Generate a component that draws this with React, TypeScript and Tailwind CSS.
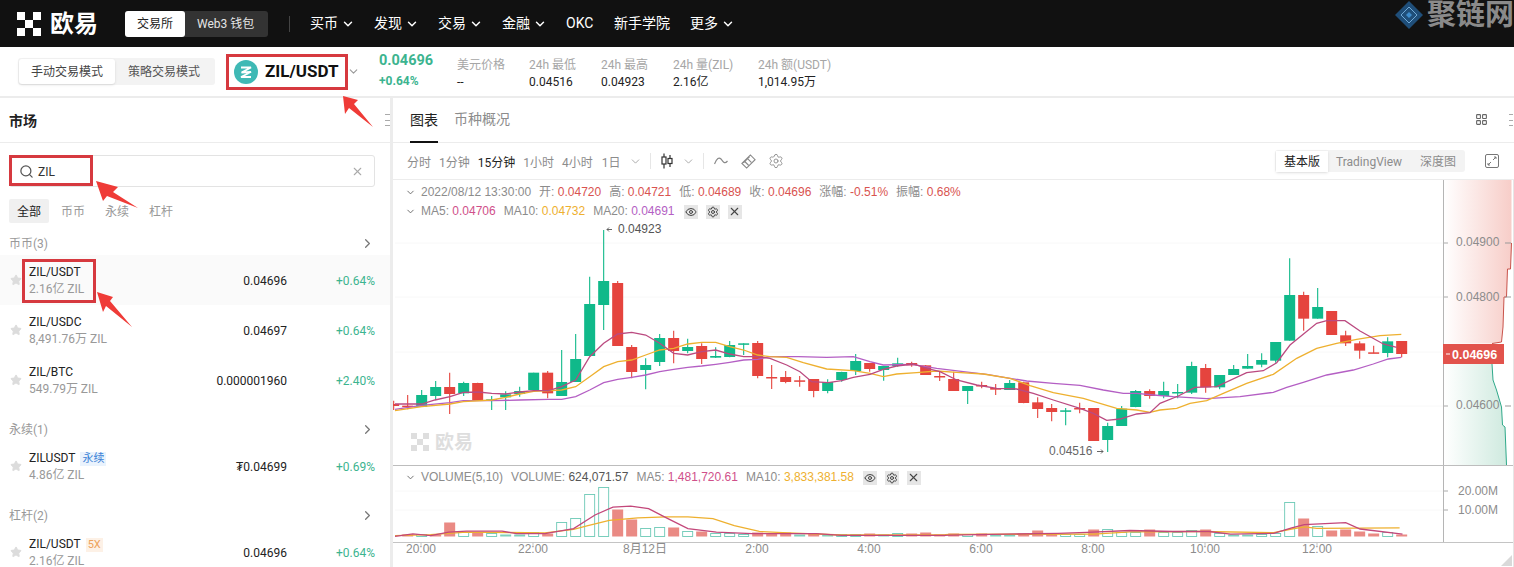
import React from 'react';
import { ChevronDown, ChevronRight, Eye, LayoutGrid, Search, Settings, Star, X } from 'lucide-react';

const UP = '#10b98a';
const DOWN = '#e5443e';

type Candle = [number, number, number, number, string];

// y values read at 3x, base is the y where each block starts
const candlesA: Candle[] = [
  [662, 690, 672, 678, 'r'], [645, 688, 677, 680, 'r'], [630, 680, 645, 680, 'g'], [603, 660, 621, 648, 'g'],
  [578, 702, 621, 642, 'r'], [605, 648, 609, 640, 'g'], [608, 660, 609, 660, 'r'], [648, 690, 658, 663, 'g'],
  [634, 690, 643, 652, 'g'], [620, 650, 633, 642, 'g'], [578, 630, 578, 630, 'g'], [573, 655, 578, 640, 'r'],
  [510, 648, 606, 648, 'g'], [462, 606, 537, 606, 'g'], [290, 528, 372, 528, 'g'], [150, 450, 303, 375, 'g'],
  [303, 498, 309, 498, 'r'], [495, 595, 501, 576, 'r'], [535, 628, 555, 570, 'g'], [462, 558, 474, 546, 'g'],
  [452, 550, 474, 513, 'r'], [476, 520, 501, 513, 'g'], [490, 552, 498, 537, 'r'], [502, 534, 528, 533, 'g'],
  [483, 532, 495, 531, 'g'], [490, 525, 490, 494, 'g'], [483, 595, 489, 588, 'r'],
];
const candlesB: Candle[] = [
  [375, 447, 411, 414, 'r'], [393, 430, 411, 426, 'r'], [408, 440, 421, 424, 'r'], [417, 472, 417, 453, 'r'],
  [418, 460, 426, 453, 'g'], [395, 425, 396, 420, 'g'], [342, 405, 363, 393, 'g'], [369, 395, 369, 387, 'r'],
  [378, 422, 378, 390, 'g'], [353, 380, 370, 378, 'g'], [365, 380, 369, 376, 'r'], [375, 405, 376, 405, 'r'],
  [393, 423, 408, 412, 'r'], [395, 453, 417, 453, 'r'], [438, 492, 438, 453, 'g'], [425, 445, 435, 439, 'r'],
  [432, 465, 444, 449, 'r'], [420, 450, 429, 450, 'g'], [425, 490, 427, 489, 'r'], [472, 534, 487, 507, 'r'],
  [492, 544, 504, 516, 'r'], [504, 556, 511, 515, 'g'], [488, 520, 504, 507, 'r'], [504, 603, 504, 603, 'r'],
  [548, 636, 558, 600, 'g'], [498, 558, 506, 558, 'g'], [450, 502, 453, 501, 'g'],
];
const candlesC: Candle[] = [
  [628, 656, 633, 648, 'r'], [605, 655, 633, 648, 'g'], [612, 655, 636, 640, 'g'], [545, 642, 558, 638, 'g'],
  [552, 638, 564, 622, 'r'], [585, 628, 585, 622, 'g'], [555, 585, 567, 585, 'g'], [522, 566, 558, 566, 'g'],
  [520, 562, 540, 554, 'g'], [486, 548, 486, 542, 'g'], [235, 482, 345, 482, 'g'], [335, 452, 345, 416, 'r'],
  [324, 416, 381, 416, 'g'], [393, 465, 393, 465, 'r'], [452, 498, 466, 490, 'r'], [484, 536, 490, 512, 'r'],
  [497, 520, 517, 520, 'r'], [472, 532, 484, 519, 'g'], [483, 532, 483, 522, 'r'],
];

const candles = [
  ...candlesA.map(c => ({ c, base: 180 })),
  ...candlesB.map(c => ({ c, base: 240 })),
  ...candlesC.map(c => ({ c, base: 180 })),
];

// one value per candle, r = solid red, g = solid green, h = hollow
const volumes: [number, string][] = [
  [2, 'r'], [2, 'h'], [2, 'r'], [14, 'r'], [4, 'h'], [4, 'r'], [3, 'h'], [2, 'g'], [2, 'g'], [4, 'h'], [3, 'r'],
  [14, 'h'], [18, 'h'], [42, 'h'], [49, 'h'], [27, 'r'], [17, 'r'], [8, 'h'], [9, 'h'], [9, 'r'], [5, 'h'], [5, 'r'],
  [3, 'h'], [3, 'h'], [2, 'h'], [4, 'r'], [3, 'r'], [4, 'r'], [2, 'g'], [3, 'r'], [2, 'g'], [2, 'h'], [2, 'h'],
  [3, 'r'], [2, 'g'], [3, 'h'], [3, 'r'], [4, 'r'], [2, 'r'], [3, 'r'], [2, 'h'], [3, 'r'], [2, 'g'], [2, 'g'],
  [3, 'r'], [6, 'r'], [3, 'r'], [2, 'h'], [2, 'h'], [7, 'r'], [7, 'h'], [4, 'h'], [4, 'h'], [7, 'r'], [4, 'h'],
  [4, 'h'], [6, 'h'], [7, 'r'], [3, 'h'], [2, 'g'], [2, 'g'], [2, 'h'], [3, 'h'], [34, 'h'], [18, 'r'], [10, 'h'],
  [6, 'r'], [7, 'r'], [5, 'r'], [3, 'r'], [4, 'h'], [2, 'r'],
];

const toPts = (pts: number[][], ox: number, oy: number, k = 3) =>
  pts.map(([x, y]) => `${(ox + x / k).toFixed(1)},${(oy + y / k).toFixed(1)}`).join(' ');

const ma5 =
  toPts([[0, 672], [80, 672], [120, 660], [165, 650], [205, 637], [250, 636], [290, 640], [332, 642], [374, 636], [416, 632], [460, 632], [500, 620], [542, 600], [584, 530], [626, 490], [668, 462], [710, 457], [752, 465], [794, 490], [836, 520], [878, 525], [920, 515], [962, 510], [1004, 522], [1046, 530], [1088, 530]], 395, 180) + ' ' +
  toPts([[0, 355], [50, 375], [90, 395], [125, 425], [175, 428], [215, 422], [250, 412], [300, 403], [340, 388], [380, 378], [430, 372], [470, 385], [510, 395], [560, 420], [620, 435], [680, 445], [740, 447], [790, 460], [850, 480], [930, 505], [970, 520], [1010, 541], [1050, 537], [1100, 522]], 770, 240) + ' ' +
  toPts([[30, 698], [60, 670], [115, 648], [165, 622], [230, 620], [320, 578], [370, 572], [410, 548], [450, 495], [530, 430], [560, 422], [615, 422], [660, 453], [730, 492], [770, 502]], 1140, 180);

const ma10 =
  toPts([[0, 692], [80, 680], [165, 672], [205, 665], [290, 660], [332, 652], [374, 642], [416, 634], [500, 630], [542, 620], [584, 590], [626, 560], [668, 545], [710, 540], [752, 525], [794, 510], [836, 505], [878, 492], [920, 487], [962, 487], [1004, 500], [1046, 510], [1088, 525]], 395, 180) + ' ' +
  toPts([[0, 350], [50, 352], [100, 368], [170, 387], [250, 392], [300, 400], [340, 410], [380, 402], [440, 398], [500, 393], [560, 397], [640, 402], [720, 415], [780, 437], [850, 458], [940, 475], [1040, 505], [1100, 510]], 770, 240) + ' ' +
  toPts([[30, 697], [60, 690], [110, 685], [150, 670], [200, 662], [250, 640], [320, 610], [400, 583], [470, 535], [530, 505], [590, 490], [650, 478], [720, 467], [784, 463]], 1140, 180);

const ma20 =
  toPts([[0, 688], [80, 676], [165, 668], [205, 662], [290, 662], [374, 660], [460, 658], [500, 658], [542, 650], [584, 630], [626, 608], [668, 598], [710, 592], [752, 585], [794, 575], [836, 568], [878, 562], [920, 558], [962, 553], [1004, 547], [1046, 540], [1088, 538]], 395, 180) + ' ' +
  toPts([[0, 350], [85, 350], [170, 352], [250, 350], [300, 365], [340, 375], [425, 373], [500, 385], [580, 395], [650, 403], [720, 415], [770, 423], [850, 430], [930, 436], [1000, 450], [1060, 460], [1100, 460]], 770, 240) + ' ' +
  toPts([[40, 645], [100, 650], [200, 656], [300, 650], [400, 637], [440, 622], [490, 607], [560, 585], [640, 570], [700, 552], [745, 537], [784, 532]], 1140, 180);

const volMa5 =
  toPts([[0, 200], [50, 193], [100, 198], [150, 188], [200, 185], [300, 185], [340, 192], [420, 192], [500, 178], [560, 140], [610, 118], [660, 115], [710, 122], [760, 148], [820, 178], [900, 188], [1000, 192], [1180, 192], [1250, 197], [1540, 197]], 395, 465, 2.8) + ' ' +
  toPts([[0, 195], [300, 190], [380, 187], [500, 182], [620, 185], [720, 185], [780, 192], [900, 190], [950, 175], [985, 166], [1100, 160], [1140, 178], [1258, 192]], 950, 465, 2.78);

const volMa10 =
  toPts([[0, 198], [100, 195], [200, 188], [420, 190], [500, 180], [540, 170], [600, 155], [680, 148], [760, 145], [820, 145], [890, 150], [950, 170], [1020, 186], [1100, 190], [1250, 196], [1540, 195]], 395, 465, 2.8) + ' ' +
  toPts([[0, 193], [400, 192], [500, 186], [700, 185], [900, 188], [950, 178], [985, 172], [1020, 176], [1250, 175]], 950, 465, 2.78);

const timeLabels: [number, string][] = [
  [421, '20:00'], [533, '22:00'], [645, '8月12日'], [757, '2:00'], [869, '4:00'], [981, '6:00'], [1093, '8:00'], [1205, '10:00'], [1317, '12:00'],
];

function Logo({ className, fill }: { className: string; fill: string }) {
  return (
    <svg viewBox="0 0 24 24" className={className} fill={fill}>
      <rect x="0" y="0" width="8" height="8" />
      <rect x="16" y="0" width="8" height="8" />
      <rect x="8" y="8" width="8" height="8" />
      <rect x="0" y="16" width="8" height="8" />
      <rect x="16" y="16" width="8" height="8" />
    </svg>
  );
}

function ChartSvg() {
  return (
    <svg viewBox="393 180 1121 387" className="absolute inset-0 w-full h-full [font-family:'Liberation_Sans','Noto_Sans_CJK_SC',sans-serif]">
      <defs>
        <linearGradient id="askFill" x1="0" x2="1" y1="0" y2="0">
          <stop offset="0" stopColor="#ffffff" />
          <stop offset="1" stopColor="#f7cdc8" />
        </linearGradient>
        <linearGradient id="bidFill" x1="0" x2="1" y1="0" y2="0">
          <stop offset="0" stopColor="#ffffff" />
          <stop offset="1" stopColor="#cfeadf" />
        </linearGradient>
      </defs>

      {[243, 297, 352, 406, 491, 510].map(y => (
        <line key={y} x1="395" x2="1443" y1={y} y2={y} stroke="#f8f8f8" />
      ))}

      {/* depth */}
      <polygon
        points="1444,180 1511.5,180 1511.5,243 1510.5,269 1507.5,269 1506.5,297 1504,297 1503,327 1501.5,342 1492,343.5 1444,343.5"
        fill="url(#askFill)"
      />
      <polyline points="1511.5,243 1510.5,269 1507.5,269 1506.5,297 1504,297 1503,327 1501.5,342 1492,343.5" fill="none" stroke="#c9534b" />
      <polygon
        points="1444,364 1492,364 1493,380 1496.5,390 1501.5,407 1502.5,425 1505,427 1506.5,465 1444,465"
        fill="url(#bidFill)"
      />
      <polyline points="1492,364 1493,380 1496.5,390 1501.5,407 1502.5,425 1505,427 1506.5,465" fill="none" stroke="#2fa98a" />

      {/* candles */}
      {candles.map(({ c, base }, i) => {
        const x = 393.67 + 14 * i;
        const col = c[4] === 'g' ? UP : DOWN;
        const top = base + c[2] / 3;
        const h = Math.max(1.5, (c[3] - c[2]) / 3);
        return (
          <g key={i}>
            <line x1={x} x2={x} y1={base + c[0] / 3} y2={base + c[1] / 3} stroke={col} strokeWidth="1.1" />
            <rect x={x - 5.5} y={top} width="11" height={h} fill={col} />
          </g>
        );
      })}

      <polyline points={ma20} fill="none" stroke="#b45fc4" strokeWidth="1.3" />
      <polyline points={ma10} fill="none" stroke="#eeb02f" strokeWidth="1.3" />
      <polyline points={ma5} fill="none" stroke="#bb4a80" strokeWidth="1.3" />

      <path d="M607 229.5h5M607 229.5l2-2M607 229.5l2 2" fill="none" stroke="#555" strokeWidth="0.9" />
      <text x="618" y="233" fontSize="12" fill="#555">0.04923</text>
      <text x="1049" y="455" fontSize="12" fill="#666">0.04516</text>
      <path d="M1097 451.5h6M1103 451.5l-2-2M1103 451.5l-2 2" fill="none" stroke="#555" strokeWidth="0.9" />

      {/* volume */}
      {volumes.map(([h, t], i) => {
        const x = 407.67 + 14 * i;
        if (t === 'h') {
          return <rect key={i} x={x - 5} y={536.5 - h} width="10" height={h} fill="#fff" stroke="#6cc9b6" strokeWidth="0.9" />;
        }
        return <rect key={i} x={x - 5.5} y={536.5 - h} width="11" height={h} fill={t === 'r' ? '#ea8a84' : '#7fd0bb'} />;
      })}
      <polyline points={volMa10} fill="none" stroke="#eeb02f" strokeWidth="1.3" />
      <polyline points={volMa5} fill="none" stroke="#c3477a" strokeWidth="1.3" />

      {/* axes */}
      <line x1="1443.5" x2="1443.5" y1="180" y2="542" stroke="#b5b5b5" />
      <line x1="393" x2="1513" y1="465.5" y2="465.5" stroke="#bdbdbd" />
      <line x1="393" x2="1513" y1="542.5" y2="542.5" stroke="#c4c4c4" />
      <line x1="1513.5" x2="1513.5" y1="0" y2="567" stroke="#e6e6e6" />
      {[243, 297, 352, 406, 491, 510].map(y => (
        <line key={y} x1="1444" x2="1448" y1={y} y2={y} stroke="#aaa" />
      ))}
      {[243, 297, 406].map(y => (
        <line key={y} x1="1505" x2="1511" y1={y} y2={y} stroke="#999" />
      ))}
      {[
        [246, '0.04900'], [301, '0.04800'], [409, '0.04600'],
      ].map(([y, t]) => (
        <text key={t} x="1456" y={y} fontSize="12" fill="#8c8c8c">{t}</text>
      ))}
      <text x="1458" y="495" fontSize="12" fill="#8c8c8c">20.00M</text>
      <text x="1458" y="514" fontSize="12" fill="#8c8c8c">10.00M</text>

      <rect x="1443" y="344" width="61" height="20" fill="#e2534c" />
      <line x1="1446" x2="1450" y1="354" y2="354" stroke="#fff" />
      <text x="1452" y="358.5" fontSize="12.5" fontWeight="700" fill="#fff">0.04696</text>

      {timeLabels.map(([x, t]) => (
        <g key={t}>
          <line x1={x} x2={x} y1="542" y2="546" stroke="#c4c4c4" />
          <text x={x} y="553" fontSize="12" textAnchor="middle" fill="#8c8c8c">{t}</text>
        </g>
      ))}
      <polygon points="1512,555 1512,566 1501,566" fill="#d9d9d9" />

      <g fill="#dedede">
        <rect x="411" y="433" width="6" height="6" />
        <rect x="423" y="433" width="6" height="6" />
        <rect x="417" y="439" width="6" height="6" />
        <rect x="411" y="445" width="6" height="6" />
        <rect x="423" y="445" width="6" height="6" />
        <text x="435" y="449" fontSize="19" fontWeight="700">欧易</text>
      </g>
    </svg>
  );
}

function LegendButtons() {
  return (
    <span className="flex items-center gap-[8px] ml-[9px]">
      <span className="w-[14px] h-[14px] bg-[#e6e6e6] flex items-center justify-center"><Eye size={12} color="#444" /></span>
      <span className="w-[14px] h-[14px] bg-[#e6e6e6] flex items-center justify-center"><Settings size={12} color="#444" /></span>
      <span className="w-[14px] h-[14px] bg-[#e6e6e6] flex items-center justify-center"><X size={13} color="#444" /></span>
    </span>
  );
}

function Chart() {
  const g = 'text-[#8c8c8c]';
  const r = 'text-[#d9534f] mr-[8px]';
  return (
    <div className="relative flex-1 min-h-0">
      <ChartSvg />
      <div className="absolute left-[12px] top-[3px] text-[12px] leading-[19px] [font-family:'Liberation_Sans','Noto_Sans_CJK_SC',sans-serif]">
        <div className="flex items-center whitespace-pre">
          <ChevronDown size={11} color="#666" className="mr-[5px]" />
          <span className={`${g} mr-[8px]`}>2022/08/12 13:30:00</span>
          <span className={g}>开: </span><span className={r}>0.04720</span>
          <span className={g}>高: </span><span className={r}>0.04721</span>
          <span className={g}>低: </span><span className={r}>0.04689</span>
          <span className={g}>收: </span><span className={r}>0.04696</span>
          <span className={g}>涨幅: </span><span className={r}>-0.51%</span>
          <span className={g}>振幅: </span><span className={r}>0.68%</span>
        </div>
        <div className="flex items-center whitespace-pre">
          <ChevronDown size={11} color="#666" className="mr-[5px]" />
          <span className={g}>MA5: </span><span className="text-[#d0508a] mr-[8px]">0.04706</span>
          <span className={g}>MA10: </span><span className="text-[#eeb02f] mr-[8px]">0.04732</span>
          <span className={g}>MA20: </span><span className="text-[#b45fc4]">0.04691</span>
          <LegendButtons />
        </div>
      </div>
      <div className="absolute left-[12px] top-[288px] text-[12px] leading-[19px] flex items-center whitespace-pre [font-family:'Liberation_Sans','Noto_Sans_CJK_SC',sans-serif]">
        <ChevronDown size={11} color="#666" className="mr-[5px]" />
        <span className={`${g} mr-[8px]`}>VOLUME(5,10)</span>
        <span className={g}>VOLUME: </span><span className="text-[#555] mr-[8px]">624,071.57</span>
        <span className={g}>MA5: </span><span className="text-[#d0508a] mr-[8px]">1,481,720.61</span>
        <span className={g}>MA10: </span><span className="text-[#eeb02f]">3,833,381.58</span>
        <LegendButtons />
      </div>
    </div>
  );
}

function Toolbar() {
  const item = 'text-[12px] text-[#8c8c8c]';
  return (
    <div className="h-[37px] flex items-center border-b border-[#ececec] pl-[14px] pr-[15px] shrink-0">
      <span className={`${item} mr-[8px] pt-[3px]`}>分时</span>
      <span className={`${item} mr-[8px] pt-[3px]`}>1分钟</span>
      <span className="text-[12px] text-[#222] mr-[8px] pt-[3px]">15分钟</span>
      <span className={`${item} mr-[8px] pt-[3px]`}>1小时</span>
      <span className={`${item} mr-[8px] pt-[3px]`}>4小时</span>
      <span className={`${item} pt-[3px] ml-px`}>1日</span>
      <ChevronDown size={13} color="#999" className="ml-[8px]" strokeWidth={1.5} />
      <span className="w-px h-[16px] bg-[#e6e6e6] ml-[8px]" />
      <svg viewBox="0 0 12 16" className="w-[12px] h-[16px] ml-[10px]" fill="none" stroke="#333" strokeWidth="1.2">
        <path d="M3 0.5v15M9 2v12" />
        <rect x="1" y="4" width="4" height="7" fill="#fff" />
        <rect x="7" y="5.5" width="4" height="5" fill="#fff" />
      </svg>
      <ChevronDown size={13} color="#999" className="ml-[9px]" strokeWidth={1.5} />
      <span className="w-px h-[16px] bg-[#e6e6e6] ml-[8px]" />
      <svg viewBox="0 0 14 10" className="w-[14px] h-[10px] ml-[10px]" fill="none" stroke="#888" strokeWidth="1.2">
        <path d="M0.5 8 C3 2 5 1 7 3 S10 9 13.5 5" />
      </svg>
      <svg viewBox="0 0 16 16" className="w-[15px] h-[15px] ml-[13px]" fill="none" stroke="#888" strokeWidth="1.2">
        <path d="M1 10 10 1l5 5-9 9zM4 8l4 4M7 5l4 4M9.5 2.5l-7 7" />
      </svg>
      <Settings size={16} color="#888" strokeWidth={1.3} className="ml-[12px]" />
      <div className="ml-auto flex items-center bg-[#f3f3f3] rounded-[3px] h-[22px] w-[190px] text-[12px] text-[#8c8c8c]">
        <span className="bg-white w-[52px] h-[21px] ml-px pt-[2px] flex items-center justify-center text-[#222] shadow-sm">基本版</span>
        <span className="ml-[8px] pt-[2px]">TradingView</span>
        <span className="ml-[18px] pt-[2px]">深度图</span>
      </div>
      <svg viewBox="0 0 14 14" className="w-[14px] h-[14px] ml-[20px]" fill="none" stroke="#777" strokeWidth="1">
        <rect x="0.5" y="0.5" width="13" height="13" rx="1.5" />
        <path d="M8 6l3-3M9 3h2v2M6 8l-3 3M3 9v2h2" />
      </svg>
    </div>
  );
}

function ChartPanel() {
  return (
    <div className="flex-1 bg-white flex flex-col min-w-0">
      <div className="h-[45px] shrink-0 flex items-end pl-[17px] border-b border-[#ececec] relative">
        <span className="text-[14px] leading-[20px] text-[#222] pt-px pb-[11px] border-b-[2px] border-[#111] -mb-px h-[34px]">图表</span>
        <span className="text-[14px] leading-[20px] text-[#8c8c8c] ml-[16px] pt-px h-[34px]">币种概况</span>
        <LayoutGrid size={13} color="#666" className="absolute right-[26px] top-[15px]" />
        <span className="absolute right-[1px] top-[16px] w-[4px] h-[12px] border-y border-[#aaa] flex items-center"><span className="w-full h-px bg-[#aaa]" /></span>
      </div>
      <Toolbar />
      <Chart />
    </div>
  );
}

function Row({ name, sub, price, change, tag, hover }: { name: string; sub: string; price: string; change: string; tag?: React.ReactNode; hover?: boolean }) {
  return (
    <div className={`h-[50px] flex items-center pl-[10px] pr-[15px] ${hover ? 'bg-[#fafafa]' : ''}`}>
      <Star size={12} fill="#dcdcdc" color="#dcdcdc" className="shrink-0" />
      <div className="ml-[7px] flex-1 min-w-0 pt-[2px]">
        <div className="text-[12px] leading-[17px] text-[#222] flex items-center">{name}{tag}</div>
        <div className="text-[12px] leading-[17px] text-[#999]">{sub}</div>
      </div>
      <span className="text-[12px] text-[#222] pt-[2px]">{price}</span>
      <span className="w-[88px] text-right text-[12px] text-[#3cb48f] pt-[2px]">{change}</span>
    </div>
  );
}

function Group({ title, children }: { title: string; children: React.ReactNode }) {
  return (
    <div className="mb-[12px]">
      <div className="h-[24px] flex items-center justify-between pl-[9px] pr-[15px] text-[12px] text-[#999]">
        <span className="pt-[2px]">{title}</span>
        <ChevronRight size={15} color="#777" />
      </div>
      {children}
    </div>
  );
}

function MarketPanel() {
  return (
    <div className="w-[390px] shrink-0 bg-white overflow-hidden flex flex-col">
      <div className="h-[45px] shrink-0 flex items-center pl-[9px] border-b border-[#ececec] relative">
        <span className="text-[14px] font-bold text-[#222] pt-[2px]">市场</span>
        <span className="absolute right-0 top-[16px] w-[5px] h-[12px] border-y border-[#aaa] flex items-center"><span className="w-full h-px bg-[#aaa]" /></span>
      </div>
      <div className="mt-[12px] ml-[9px] w-[366px] h-[32px] shrink-0 border border-[#e3e3e3] rounded-[3px] flex items-center pl-[9px] pr-[10px]">
        <Search size={15} color="#555" />
        <span className="ml-[4px] pt-[2px] text-[12px] text-[#333] flex-1">ZIL</span>
        <X size={13} color="#aaa" />
      </div>
      <div className="mt-[12px] ml-[9px] h-[24px] shrink-0 flex items-center text-[12px] text-[#999]">
        <span className="w-[40px] h-[24px] pt-[2px] bg-[#f0f0f0] rounded-[2px] flex items-center justify-center text-[#222]">全部</span>
        <span className="ml-[12px] pt-[2px]">币币</span>
        <span className="ml-[20px] pt-[2px]">永续</span>
        <span className="ml-[20px] pt-[2px]">杠杆</span>
      </div>
      <div className="mt-[8px]">
        <Group title="币币(3)">
          <Row hover name="ZIL/USDT" sub="2.16亿 ZIL" price="0.04696" change="+0.64%" />
          <Row name="ZIL/USDC" sub="8,491.76万 ZIL" price="0.04697" change="+0.64%" />
          <Row name="ZIL/BTC" sub="549.79万 ZIL" price="0.000001960" change="+2.40%" />
        </Group>
        <Group title="永续(1)">
          <Row
            name="ZILUSDT"
            sub="4.86亿 ZIL"
            price="₮0.04699"
            change="+0.69%"
            tag={<span className="ml-[5px] px-[2px] text-[11px] leading-[14px] bg-[#eaf3fd] text-[#3b82d6]">永续</span>}
          />
        </Group>
        <Group title="杠杆(2)">
          <Row
            name="ZIL/USDT"
            sub="2.16亿 ZIL"
            price="0.04696"
            change="+0.64%"
            tag={<span className="ml-[5px] px-[2px] text-[11px] leading-[14px] bg-[#fdf1e6] text-[#eda35c]">5X</span>}
          />
        </Group>
      </div>
    </div>
  );
}

function Stat({ label, value, width }: { label: string; value: string; width: string }) {
  return (
    <div className={`${width} shrink-0 mt-[4px]`}>
      <div className="text-[12px] leading-[17px] text-[#a6a6a6] whitespace-nowrap">{label}</div>
      <div className="text-[12px] leading-[17px] text-[#222] whitespace-nowrap">{value}</div>
    </div>
  );
}

function SubHeader() {
  return (
    <div className="h-[49px] shrink-0 bg-white flex items-center pl-[18px]">
      <div className="w-[197px] h-[27px] bg-[#f3f3f3] rounded-[3px] flex items-center text-[12px] text-[#555]">
        <span className="w-[96px] h-[25px] ml-px bg-white rounded-[3px] shadow-sm flex items-center justify-center text-[#444]">手动交易模式</span>
        <span className="ml-[13px]">策略交易模式</span>
      </div>
      <div className="ml-[11px] w-[122px] h-[36px] border-[3px] border-[#d6393f] flex items-center pl-[5px]">
        <svg viewBox="0 0 24 24" className="w-[24px] h-[24px] shrink-0">
          <circle cx="12" cy="12" r="12" fill="#3fb9b5" />
          <path d="M7 7.5h10L7.5 12.5 17 12 7 17h10" fill="none" stroke="#fff" strokeWidth="1.8" />
        </svg>
        <span className="ml-[7px] text-[17px] font-bold text-[#111] whitespace-nowrap">ZIL/USDT</span>
      </div>
      <ChevronDown size={13} color="#999" className="ml-[-1px]" />
      <div className="ml-[19px] w-[78px] shrink-0 font-bold text-[#3cb48f]">
        <div className="text-[14.5px] leading-[20px]">0.04696</div>
        <div className="text-[12px] leading-[21px]">+0.64%</div>
      </div>
      <Stat label="美元价格" value="--" width="w-[72px]" />
      <Stat label="24h 最低" value="0.04516" width="w-[72px]" />
      <Stat label="24h 最高" value="0.04923" width="w-[72px]" />
      <Stat label="24h 量(ZIL)" value="2.16亿" width="w-[85px]" />
      <Stat label="24h 额(USDT)" value="1,014.95万" width="w-[90px]" />
    </div>
  );
}

function TopNav() {
  const links = [
    { t: '买币', w: 'w-[64px]', c: true },
    { t: '发现', w: 'w-[64px]', c: true },
    { t: '交易', w: 'w-[64px]', c: true },
    { t: '金融', w: 'w-[64px]', c: true },
    { t: 'OKC', w: 'w-[48px]', c: false },
    { t: '新手学院', w: 'w-[76px]', c: false },
    { t: '更多', w: 'w-[64px]', c: true },
  ];
  return (
    <div className="h-[47px] shrink-0 bg-[#111] flex items-center pl-[17px] relative">
      <Logo className="w-[24px] h-[24px]" fill="#fff" />
      <span className="ml-[9px] text-[24px] leading-[30px] font-bold text-white whitespace-nowrap">欧易</span>
      <div className="ml-[27px] w-[143px] h-[26px] rounded-[3px] bg-[#333] flex items-center text-[12px] text-[#e5e5e5]">
        <span className="w-[60px] h-[26px] rounded-[3px] bg-white text-[#222] flex items-center justify-center">交易所</span>
        <span className="ml-[12px] whitespace-nowrap">Web3 钱包</span>
      </div>
      <span className="ml-[21px] w-px h-[16px] bg-[#444]" />
      <div className="ml-[20px] flex items-center text-[14px] text-white">
        {links.map(l => (
          <span key={l.t} className={`${l.w} flex items-center whitespace-nowrap`}>
            {l.t}
            {l.c && <ChevronDown size={14} className="ml-[3px]" strokeWidth={2.5} />}
          </span>
        ))}
      </div>
      <div className="absolute right-0 top-0 flex items-center h-[30px]">
        <svg viewBox="0 0 28 28" className="w-[28px] h-[28px]">
          <path d="M14 0 28 14 14 28 0 14z" fill="#1f4e79" />
          <path d="M14 6 22 14 14 22 6 14z" fill="none" stroke="#6fa8d6" strokeWidth="1" />
          <path d="M14 11 17 14 14 17 11 14z" fill="#3e8ccc" />
        </svg>
        <span className="ml-[4px] text-[29px] leading-[30px] font-bold text-[#8a8a8a] whitespace-nowrap">聚链网</span>
      </div>
    </div>
  );
}

function Annotations() {
  return (
    <>
      <div className="absolute left-[9px] top-[155px] w-[84px] h-[31px] border-[3px] border-[#d6393f]" />
      <div className="absolute left-[22px] top-[259px] w-[74px] h-[44px] border-[3px] border-[#d6393f]" />
      <svg className="absolute left-0 top-0 w-[400px] h-[340px] pointer-events-none" viewBox="0 0 400 340" fill="#ef3b37">
        <polygon points="343,96 358,100 354,104 373,127 349,108 345,114" />
        <polygon points="96,181 118,187 113,192 138,208 107,196 103,201" />
        <polygon points="97,292 113,297 110,301 132,327 106,306 103,312" />
      </svg>
    </>
  );
}

export default function App() {
  return (
    <div className="relative w-[1514px] h-[567px] overflow-hidden bg-[#ececec] flex flex-col [font-family:Roboto,'Noto_Sans_CJK_SC',sans-serif]">
      <TopNav />
      <SubHeader />
      <div className="mt-[2px] flex-1 min-h-0 flex gap-[3px]">
        <MarketPanel />
        <ChartPanel />
      </div>
      <Annotations />
    </div>
  );
}
